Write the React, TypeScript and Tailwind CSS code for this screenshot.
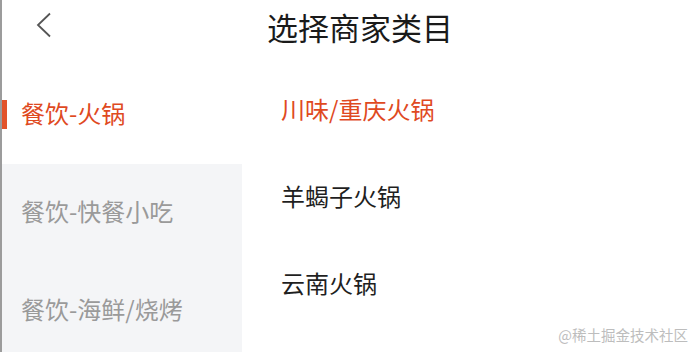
const cjk = { fontFamily: '"Noto Sans CJK SC", "Noto Sans", sans-serif' }

const categories = ['餐饮-火锅', '餐饮-快餐小吃', '餐饮-海鲜/烧烤']
const subs = ['川味/重庆火锅', '羊蝎子火锅', '云南火锅']

export default function App() {
  const active = 0
  const activeSub = 0
  return (
    <div className="relative w-[694px] h-[352px] overflow-hidden bg-white border-l-2 border-[#9c9c9c]" style={cjk}>
      {/* header */}
      <div className="relative h-[52px] flex items-center justify-center">
        <svg className="absolute left-[33px] top-[12px]" width="18" height="26" viewBox="0 0 18 26" fill="none">
          <path d="M15 1.5 L3 13 L15 24.5" stroke="#555" strokeWidth="1.8" />
        </svg>
        <div className="text-[31px] leading-none text-[#1a1a1a] ml-[24px] mt-[1px]">选择商家类目</div>
      </div>

      <div className="flex pt-[14px]">
        {/* left categories */}
        <div className="w-[240px] flex flex-col">
          {categories.map((c, i) => (
            <div
              key={c}
              className={`relative h-[98px] flex items-center pl-[19px] text-[24px] ${
                i === active ? 'bg-white text-[#df4a1f]' : 'bg-[#f4f5f7] text-[#9a9a9a]'
              }`}
            >
              {i === active && <div className="absolute left-0 top-[34px] w-[5px] h-[29px] bg-[#e2532a]" />}
              <span className="-mt-[4px]">{c}</span>
            </div>
          ))}
        </div>

        {/* right list */}
        <div className="flex-1 flex flex-col gap-[63px] pl-[39px] pt-[31px]">
          {subs.map((s, i) => (
            <div
              key={s}
              className={`h-[24px] leading-[24px] text-[24px] ${i === activeSub ? 'text-[#df4a1f]' : 'text-[#1f1f1f]'}`}
            >
              {s}
            </div>
          ))}
        </div>
      </div>

      <div className="absolute right-[6px] bottom-[6px] text-[14.5px] text-[#bdbdbd]">@稀土掘金技术社区</div>
    </div>
  )
}
